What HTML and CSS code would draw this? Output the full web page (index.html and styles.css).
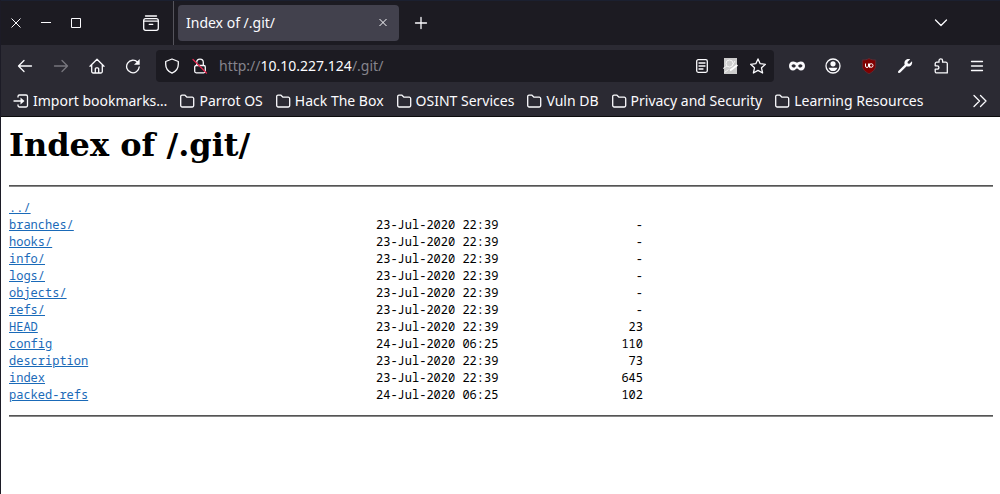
FILE: index.html
```html
<!DOCTYPE html>
<html lang="en">
<head>
<meta charset="utf-8">
<title>Index of /.git/</title>
<link rel="stylesheet" href="styles.css">
</head>
<body>
<div class="window">
  <header class="chrome">
    <div class="tabstrip">
      <div class="window-controls">
        <button class="win-btn" aria-label="Close window"><svg width="16" height="16" viewBox="0 0 16 16"><path d="M3.500 3.500l9 9M12.500 3.500l-9 9"/></svg></button>
        <button class="win-btn" aria-label="Minimize"><svg width="16" height="16" viewBox="0 0 16 16"><path d="M3 7.500h10"/></svg></button>
        <button class="win-btn" aria-label="Maximize"><svg width="16" height="16" viewBox="0 0 16 16"><path d="M3.500 3.500h9v9h-9z"/></svg></button>
      </div>
      <button class="tool recent" aria-label="Recent browsing"><svg class="bold" width="18" height="18" viewBox="0 0 18 18"><path d="M3.500 2h11"/><rect x="1.700" y="4.700" width="14.600" height="11.600" rx="2"/><path d="M1.700 7.200h14.600M7.200 10.300h3.600"/></svg></button>
      <div class="tab">
        <span class="tab-title">Index of /.git/</span>
        <button class="tab-close" aria-label="Close tab"><svg width="16" height="16" viewBox="0 0 16 16"><path d="M4.500 4l7 7M11.500 4l-7 7"/></svg></button>
      </div>
      <button class="new-tab" aria-label="New tab"><svg class="bold" width="16" height="16" viewBox="0 0 16 16"><path d="M8 2.500v11M2.500 8h11"/></svg></button>
      <button class="tool all-tabs" aria-label="List all tabs"><svg class="bold" width="16" height="16" viewBox="0 0 16 16"><path d="M2.500 5l5.500 5.500L13.500 5"/></svg></button>
    </div>

    <nav class="toolbar" aria-label="Navigation">
      <button class="tool" aria-label="Back"><svg class="bold" width="16" height="16" viewBox="0 0 16 16"><path d="M14.500 8H1.500M7 2.500L1.500 8L7 13.500"/></svg></button>
      <button class="tool" aria-label="Forward" disabled><svg class="bold" width="16" height="16" viewBox="0 0 16 16"><path d="M1.500 8h13M9 2.500L14.500 8L9 13.500"/></svg></button>
      <button class="tool" aria-label="Home"><svg class="bold" width="16" height="16" viewBox="0 0 16 16"><path d="M1 8.200L8 1.300l7 6.900M2.700 7v6.500a1.500 1.500 0 0 0 1.500 1.500h7.600a1.500 1.500 0 0 0 1.500-1.500V7M6.300 15v-4.200a1 1 0 0 1 1-1h1.400a1 1 0 0 1 1 1V15"/></svg></button>
      <button class="tool" aria-label="Reload"><svg class="bold" width="16" height="16" viewBox="0 0 16 16"><path d="M12.600 4.300A6.300 6.300 0 1 0 14.200 9"/><path class="solid" d="M14.700 1v5.700H9z"/></svg></button>

      <div class="urlbar">
        <button class="url-btn" aria-label="Tracking protection"><svg class="bold" width="16" height="16" viewBox="0 0 16 16"><path d="M8 1l6.300 2.500v2.700c0 4-2.200 7.200-6.300 8.900C3.900 13.400 1.700 10.200 1.700 6.200V3.500z"/></svg></button>
        <button class="url-btn" aria-label="Connection not secure"><svg class="bold" width="16" height="16" viewBox="0 0 16 16"><path d="M4.700 7V4.500a3.300 3.300 0 0 1 6.600 0V7"/><rect x="2.700" y="7.500" width="10.600" height="7.300" rx="1.500"/><path class="strike" d="M1 1.500l13.500 13.500"/></svg></button>
        <a class="url" href="#"><span class="dim">http://</span>10.10.227.124<span class="dim">/.git/</span></a>
        <button class="url-btn" aria-label="Reader view"><svg class="bold" width="16" height="16" viewBox="0 0 16 16"><rect x="2.700" y="1.700" width="10.600" height="12.600" rx="1.500"/><path d="M5 5h6M5 8h6M5 11h4"/></svg></button>
        <button class="url-btn" aria-label="Page viewer"><svg width="16" height="16" viewBox="0 0 16 16"><path class="paper" d="M2 0h13v16H2z"/><circle class="mark" cx="7.500" cy="5.500" r="3.500"/><path class="mark" d="M1 10.500l4-2.500M10 8l3-5M2.500 14.500l4-3"/><path class="pen" d="M8 12.500L15.500 7"/></svg></button>
        <button class="url-btn" aria-label="Bookmark this page"><svg class="bold" width="16" height="16" viewBox="0 0 16 16"><path d="M8 .9l2.200 4.800 5.200.6-3.900 3.500 1.100 5.200L8 12.400 3.400 15l1.100-5.200L.6 6.300l5.200-.6z"/></svg></button>
      </div>

      <button class="tool" aria-label="Private mask"><svg width="16" height="16" viewBox="0 0 16 16"><path class="solid" fill-rule="evenodd" d="M4.300 3.500C6 3.500 7 4.600 8 4.600s2-1.100 3.700-1.100C14.500 3.500 16 5.300 16 8s-1.700 4.500-4 4.500c-2.200 0-2.800-2-4-2s-1.800 2-4 2C1.700 12.500 0 10.700 0 8s1.500-4.500 4.300-4.500zM4.700 6.300C3.500 6.300 2.700 7.200 2.500 8c.5.900 1.200 1.500 2.300 1.500S6.600 8.900 6.800 8C6.500 7 5.700 6.300 4.700 6.300zm6.600 0c-1 0-1.800.7-2.100 1.700.2.900.9 1.500 2 1.500s1.800-.6 2.300-1.500c-.2-.8-1-1.700-2.200-1.700z"/></svg></button>
      <button class="tool" aria-label="Account"><svg class="bold" width="16" height="16" viewBox="0 0 16 16"><circle cx="8" cy="8" r="7"/><circle class="solid" cx="8" cy="5.800" r="2.600"/><path class="solid" d="M3.600 9.700h8.800c-.5 2-2.300 3.400-4.400 3.400S4.100 11.700 3.600 9.700z"/></svg></button>
      <button class="tool" aria-label="Content blocker"><svg width="16" height="16" viewBox="0 0 16 16"><path class="ublock" d="M8 .5c2 1.300 4.300 1.500 6.700 1.500v5c0 4.200-2.500 6.700-6.700 8.700-4.200-2-6.700-4.500-6.700-8.700V2C3.700 2 6 1.800 8 .5z"/><path class="ublock-mark" d="M4.500 5.500v2.500a1.500 1.500 0 0 0 3 0V5.500M8.500 5.500v4.100"/><circle class="ublock-mark" cx="10.200" cy="7.500" r="1.800"/></svg></button>
      <button class="tool" aria-label="Developer tools"><svg width="16" height="16" viewBox="0 0 16 16"><path class="solid" d="M11.500 1c.7 0 1.200.1 1.700.3L10.500 4l.3 1.500 1.600.3L15 3.200c.7 2.800-1 5.400-3.900 5.400-.6 0-1-.1-1.500-.3l-6.300 6.300c-1.300 1.300-3.100-.4-1.900-1.700l6.300-6.200C6.800 3.700 8.500 1 11.500 1z"/></svg></button>
      <button class="tool" aria-label="Extensions"><svg class="bold" width="16" height="16" viewBox="0 0 16 16"><path d="M6 4.200V2.700a1.800 1.800 0 0 1 3.600 0v1.500h3.200a1.500 1.500 0 0 1 1.500 1.500v9.200H3.700a1.500 1.500 0 0 1-1.500-1.500v-2.200h2a1.700 1.700 0 0 0 0-3.400h-2V5.700a1.500 1.500 0 0 1 1.500-1.500z"/></svg></button>
      <button class="tool" aria-label="Menu"><svg class="bold" width="16" height="16" viewBox="0 0 16 16"><path d="M2.500 3.500h11M2.500 8h11M2.500 12.500h11"/></svg></button>
    </nav>

    <nav class="bookmarks" aria-label="Bookmarks">
      <a class="bookmark" href="#"><svg class="bold" width="16" height="16" viewBox="0 0 16 16"><path d="M5 4V3.500a1.500 1.500 0 0 1 1.500-1.500h6.500a1.500 1.500 0 0 1 1.500 1.500v9a1.500 1.500 0 0 1-1.500 1.500H6.500A1.500 1.500 0 0 1 5 12.500V12M1 8h7"/><path class="solid" d="M7.500 4.500L11.500 8l-4 3.500z"/></svg>Import bookmarks…</a>
      <a class="bookmark" href="#"><svg class="bold" width="16" height="16" viewBox="0 0 16 16"><path d="M1.700 3.500a1.300 1.300 0 0 1 1.300-1.300h3l2 2h5.200a1.500 1.500 0 0 1 1.500 1.500v6.800a1.500 1.500 0 0 1-1.500 1.500h-10a1.500 1.500 0 0 1-1.500-1.500z"/></svg>Parrot OS</a>
      <a class="bookmark" href="#"><svg class="bold" width="16" height="16" viewBox="0 0 16 16"><path d="M1.700 3.500a1.300 1.300 0 0 1 1.300-1.300h3l2 2h5.200a1.500 1.500 0 0 1 1.500 1.500v6.800a1.500 1.500 0 0 1-1.500 1.500h-10a1.500 1.500 0 0 1-1.500-1.500z"/></svg>Hack The Box</a>
      <a class="bookmark" href="#"><svg class="bold" width="16" height="16" viewBox="0 0 16 16"><path d="M1.700 3.500a1.300 1.300 0 0 1 1.300-1.300h3l2 2h5.200a1.500 1.500 0 0 1 1.500 1.500v6.800a1.500 1.500 0 0 1-1.500 1.500h-10a1.500 1.500 0 0 1-1.500-1.500z"/></svg>OSINT Services</a>
      <a class="bookmark" href="#"><svg class="bold" width="16" height="16" viewBox="0 0 16 16"><path d="M1.700 3.500a1.300 1.300 0 0 1 1.300-1.300h3l2 2h5.200a1.500 1.500 0 0 1 1.500 1.500v6.800a1.500 1.500 0 0 1-1.500 1.500h-10a1.500 1.500 0 0 1-1.500-1.500z"/></svg>Vuln DB</a>
      <a class="bookmark" href="#"><svg class="bold" width="16" height="16" viewBox="0 0 16 16"><path d="M1.700 3.500a1.300 1.300 0 0 1 1.300-1.300h3l2 2h5.200a1.500 1.500 0 0 1 1.500 1.500v6.800a1.500 1.500 0 0 1-1.500 1.500h-10a1.500 1.500 0 0 1-1.500-1.500z"/></svg>Privacy and Security</a>
      <a class="bookmark" href="#"><svg class="bold" width="16" height="16" viewBox="0 0 16 16"><path d="M1.700 3.500a1.300 1.300 0 0 1 1.300-1.300h3l2 2h5.200a1.500 1.500 0 0 1 1.500 1.500v6.800a1.500 1.500 0 0 1-1.500 1.500h-10a1.500 1.500 0 0 1-1.500-1.500z"/></svg>Learning Resources</a>
      <button class="overflow" aria-label="More bookmarks"><svg class="bold" width="16" height="16" viewBox="0 0 16 16"><path d="M2 2.500L7.500 8L2 13.500M8.500 2.500L14 8l-5.500 5.500"/></svg></button>
    </nav>
  </header>

  <main class="page">
    <h1 class="title">Index of /.git/</h1>
    <hr class="rule">
    <table class="listing">
      <tbody>
        <tr><td class="name"><a href="#">../</a></td><td class="date"></td><td class="size"></td></tr>
        <tr><td class="name"><a href="#">branches/</a></td><td class="date">23-Jul-2020 22:39</td><td class="size">-</td></tr>
        <tr><td class="name"><a href="#">hooks/</a></td><td class="date">23-Jul-2020 22:39</td><td class="size">-</td></tr>
        <tr><td class="name"><a href="#">info/</a></td><td class="date">23-Jul-2020 22:39</td><td class="size">-</td></tr>
        <tr><td class="name"><a href="#">logs/</a></td><td class="date">23-Jul-2020 22:39</td><td class="size">-</td></tr>
        <tr><td class="name"><a href="#">objects/</a></td><td class="date">23-Jul-2020 22:39</td><td class="size">-</td></tr>
        <tr><td class="name"><a href="#">refs/</a></td><td class="date">23-Jul-2020 22:39</td><td class="size">-</td></tr>
        <tr><td class="name"><a href="#">HEAD</a></td><td class="date">23-Jul-2020 22:39</td><td class="size">23</td></tr>
        <tr><td class="name"><a href="#">config</a></td><td class="date">24-Jul-2020 06:25</td><td class="size">110</td></tr>
        <tr><td class="name"><a href="#">description</a></td><td class="date">23-Jul-2020 22:39</td><td class="size">73</td></tr>
        <tr><td class="name"><a href="#">index</a></td><td class="date">23-Jul-2020 22:39</td><td class="size">645</td></tr>
        <tr><td class="name"><a href="#">packed-refs</a></td><td class="date">24-Jul-2020 06:25</td><td class="size">102</td></tr>
      </tbody>
    </table>
    <hr class="rule">
  </main>
</div>
</body>
</html>
```

FILE: styles.css
```css
* {
  box-sizing: border-box;
}

body {
  margin: 0;
  background: #fff;
  color: #000;
}

.window {
  min-height: 100vh;
  border-left: 1px solid #1c1b26;
}

.chrome {
  background: #2b2a33;
  border-bottom: 1px solid #0c0c0d;
  color: #fbfbfe;
  font: 14px/20px "Noto Sans", sans-serif;
}

.chrome button {
  display: flex;
  flex: none;
  align-items: center;
  justify-content: center;
  margin: 0;
  padding: 0;
  border: 0;
  background: none;
  color: inherit;
}

.chrome button:disabled {
  color: #77767e;
}

.chrome svg {
  display: block;
  flex: none;
  fill: none;
  stroke: currentColor;
  stroke-width: 1;
  stroke-linejoin: round;
}

.chrome svg.bold {
  stroke-width: 1.3;
  stroke-linecap: round;
}

.chrome .solid {
  fill: currentColor;
  stroke: none;
}

.tabstrip {
  display: flex;
  align-items: center;
  height: 45px;
  background: #1c1b22;
  border-top: 1px solid #1b2030;
}

.window-controls {
  display: flex;
}

.win-btn {
  width: 30px;
  height: 30px;
}

.tool {
  width: 36px;
  height: 32px;
}

.chrome .recent {
  margin-left: 42px;
}

.tab {
  display: flex;
  align-items: center;
  justify-content: space-between;
  width: 221px;
  height: 36px;
  margin-left: 9px;
  padding: 0 8px;
  border-radius: 4px;
  background: #42414d;
  position: relative;
}

.tab::before {
  content: "";
  position: absolute;
  left: -5px;
  top: -4px;
  width: 1px;
  height: 44px;
  background: #55545c;
}

.chrome .new-tab {
  width: 32px;
  height: 32px;
  margin-left: 6px;
}

.chrome .all-tabs {
  margin-left: auto;
  margin-right: 41px;
}

.toolbar {
  display: flex;
  align-items: center;
  height: 41px;
  padding: 0 5px 0 6px;
}

.urlbar {
  display: flex;
  flex: 1;
  align-items: center;
  min-width: 0;
  height: 32px;
  margin: 0 5px;
  padding: 0 2px;
  border-radius: 4px;
  background: #1c1b22;
}

.url-btn {
  width: 28px;
  height: 28px;
}

.url {
  flex: 1;
  min-width: 0;
  padding-left: 5px;
  overflow: hidden;
  color: #fbfbfe;
  white-space: nowrap;
  text-decoration: none;
}

.dim {
  color: #85848c;
}

.strike {
  stroke: #e22850;
}

.paper {
  fill: #ccc;
  stroke: none;
}

.mark {
  stroke: #f4f4f4;
}

.pen {
  stroke: #fff;
  stroke-width: 2;
}

.ublock {
  fill: #800000;
  stroke: #5c2a33;
}

.ublock-mark {
  stroke: #fff;
}

.bookmarks {
  display: flex;
  align-items: center;
  height: 30px;
  padding: 0 10px 0 12px;
  gap: 12px;
}

.bookmark {
  display: flex;
  align-items: center;
  gap: 4px;
  color: #fbfbfe;
  white-space: nowrap;
  text-decoration: none;
}

.chrome .overflow {
  width: 20px;
  height: 24px;
  margin-left: auto;
}

.page {
  padding: 10px 7px 8px 8px;
}

.title {
  margin: 0 0 21px;
  font: bold 32px/37px "DejaVu Serif", serif;
}

.rule {
  height: 2px;
  margin: 0;
  border: 0;
  border-top: 1px solid #555;
  background: #888;
}

.listing {
  margin: 12px 0;
  border-collapse: collapse;
  font: 12px/17px "Noto Sans Mono", "DejaVu Sans Mono", monospace;
}

.listing td {
  padding: 0;
}

.listing a {
  color: #1a6ab8;
}

.name {
  min-width: 367px;
}

.date {
  width: 123px;
}

.size {
  width: 144px;
  text-align: right;
}
```
